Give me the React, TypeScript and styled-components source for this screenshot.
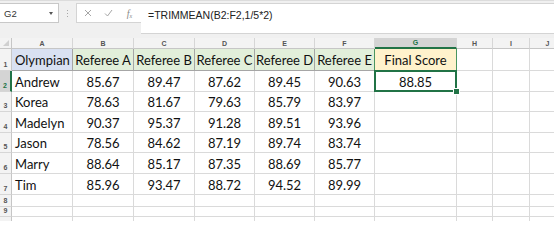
import React from 'react';
import styled, { createGlobalStyle, css } from 'styled-components';

const GlobalStyle = createGlobalStyle`
  html, body {
    margin: 0;
    padding: 0;
    background: #ffffff;
    overflow: hidden;
  }
  body {
    font-family: Lato, "Liberation Sans", sans-serif;
  }
`;

const Window = styled.div`
  width: 554px;
  height: 221px;
  overflow: hidden;
  background: #ffffff;
`;

/* ---------- formula bar ---------- */

const FormulaBar = styled.div`
  display: flex;
  align-items: flex-start;
  height: 38px;
  box-sizing: border-box;
  padding-top: 2px;
  background: #f0f0f0;
  border-top: 1px solid #dcdcdc;
`;

const NameBox = styled.div`
  display: flex;
  align-items: center;
  justify-content: space-between;
  width: 59px;
  height: 20px;
  box-sizing: border-box;
  padding: 0 5px 0 4px;
  background: #ffffff;
  border: 1px solid #c8c8c8;
  border-left: none;
  font-family: "Liberation Sans", Arial, sans-serif;
  font-size: 9.5px;
  color: #333333;
`;

const Caret = styled.span`
  width: 0;
  height: 0;
  border-left: 2.5px solid transparent;
  border-right: 2.5px solid transparent;
  border-top: 3px solid #555555;
`;

const Grip = styled.div`
  display: flex;
  justify-content: center;
  width: 17px;
  padding-top: 7px;
`;

const GripDots = styled.span`
  width: 1px;
  height: 9px;
  background: repeating-linear-gradient(#a8a8a8 0 1px, transparent 1px 3px);
`;

const IconBox = styled.div`
  display: flex;
  align-items: center;
  width: 65px;
  height: 20px;
  box-sizing: border-box;
  background: #ffffff;
  border: 1px solid #d4d4d4;
  border-right: none;
`;

const IconSlot = styled.span`
  display: flex;
  align-items: center;
  justify-content: center;
  width: 21px;
  color: #a6a6a6;
`;

const Fx = styled.span`
  font-family: "Liberation Serif", serif;
  font-style: italic;
  font-size: 10px;
  color: #8a8a8a;
  sub {
    font-size: 6px;
    vertical-align: -1px;
  }
`;

const FormulaInput = styled.div`
  flex: 1;
  height: 31px;
  box-sizing: border-box;
  padding: 5px 7px 0;
  background: #ffffff;
  border: 1px solid #d4d4d4;
  border-left: none;
  border-right: none;
  font-family: "Liberation Sans", Arial, sans-serif;
  font-size: 10.5px;
  line-height: 12px;
  color: #222222;
`;

/* ---------- sheet ---------- */

const Sheet = styled.div`
  display: grid;
  grid-template-columns: 12px 61px 61px 61px 60px 60px 60px 82px 36px 37px 36px;
  grid-template-rows: 11px 22px 21px 20px 21px 20px 21px 21px 12px 10px 12px;
`;

const headText = css`
  font-family: "Liberation Sans", Arial, sans-serif;
  font-size: 7px;
  font-weight: bold;
  color: #555555;
  box-sizing: border-box;
  background: #f3f3f3;
`;

const Corner = styled.div`
  ${headText};
  display: flex;
  align-items: flex-end;
  justify-content: flex-end;
  padding: 0 2px 2px 0;
  border-right: 1px solid #c6c6c6;
  border-bottom: 1px solid #c6c6c6;
`;

const SelectAll = styled.span`
  width: 0;
  height: 0;
  border-left: 6px solid transparent;
  border-bottom: 6px solid #d0d0d0;
`;

const ColHead = styled.div<{ $active?: boolean }>`
  ${headText};
  display: flex;
  align-items: center;
  justify-content: center;
  border-right: 1px solid #d6d6d6;
  border-bottom: 1px solid #c6c6c6;
  ${p =>
    p.$active &&
    css`
      background: #d4d4d4;
      color: #217346;
      border-bottom: 2px solid #217346;
    `}
`;

const RowHead = styled.div<{ $active?: boolean }>`
  ${headText};
  display: flex;
  align-items: flex-end;
  justify-content: center;
  padding-bottom: 1px;
  line-height: 8px;
  border-right: 1px solid #c6c6c6;
  border-bottom: 1px solid #d6d6d6;
  ${p =>
    p.$active &&
    css`
      background: #d4d4d4;
      color: #217346;
      border-right: 2px solid #217346;
    `}
`;

type CellProps = {
  $align?: 'left' | 'center';
  $fill?: string;
  $edge?: string;
  $rightEdge?: string;
  $selected?: boolean;
};

const Cell = styled.div<CellProps>`
  position: relative;
  display: flex;
  align-items: center;
  justify-content: ${p => (p.$align === 'center' ? 'center' : 'flex-start')};
  min-width: 0;
  box-sizing: border-box;
  padding: 1px 3px 0;
  background: ${p => p.$fill ?? '#ffffff'};
  border-right: 1px solid ${p => p.$rightEdge ?? p.$edge ?? '#dadada'};
  border-bottom: 1px solid ${p => p.$edge ?? '#dadada'};
  font-size: 13px;
  color: #111111;
  white-space: nowrap;

  ${p =>
    p.$selected &&
    css`
      &::after {
        content: '';
        position: absolute;
        left: -1px;
        top: -1px;
        right: -1px;
        bottom: -1px;
        border: 2px solid #217346;
        pointer-events: none;
      }
      &::before {
        content: '';
        position: absolute;
        right: -4px;
        bottom: -4px;
        width: 5px;
        height: 5px;
        background: #217346;
        border: 1px solid #ffffff;
        z-index: 2;
      }
    `}
`;

/* ---------- data ---------- */

const COLUMNS = ['A', 'B', 'C', 'D', 'E', 'F', 'G', 'H', 'I', 'J'];
const JUDGES = ['A', 'B', 'C', 'D', 'E'];

const SCORES: [string, string[]][] = [
  ['Andrew', ['85.67', '89.47', '87.62', '89.45', '90.63']],
  ['Korea', ['78.63', '81.67', '79.63', '85.79', '83.97']],
  ['Madelyn', ['90.37', '95.37', '91.28', '89.51', '93.96']],
  ['Jason', ['78.56', '84.62', '87.19', '89.74', '83.74']],
  ['Marry', ['88.64', '85.17', '87.35', '88.69', '85.77']],
  ['Tim', ['85.96', '93.47', '88.72', '94.52', '89.99']],
];

const HEAD_EDGE = '#a6a6a6';
const FINAL_EDGE = '#4a9560';

const EmptyCells = ({ count }: { count: number }) => (
  <>
    {Array.from({ length: count }, (_, i) => (
      <Cell key={i} />
    ))}
  </>
);

export default function App() {
  return (
    <>
      <GlobalStyle />
      <Window>
        <FormulaBar>
          <NameBox>
            G2
            <Caret />
          </NameBox>
          <Grip>
            <GripDots />
          </Grip>
          <IconBox>
            <IconSlot>
              <svg width="8" height="8" viewBox="0 0 8 8">
                <path d="M1 1 L7 7 M7 1 L1 7" stroke="currentColor" strokeWidth="1" fill="none" />
              </svg>
            </IconSlot>
            <IconSlot>
              <svg width="9" height="8" viewBox="0 0 9 8">
                <path d="M1 4.5 L3.5 7 L8 1" stroke="currentColor" strokeWidth="1" fill="none" />
              </svg>
            </IconSlot>
            <IconSlot>
              <Fx>
                f<sub>x</sub>
              </Fx>
            </IconSlot>
          </IconBox>
          <FormulaInput>=TRIMMEAN(B2:F2,1/5*2)</FormulaInput>
        </FormulaBar>

        <Sheet>
          <Corner>
            <SelectAll />
          </Corner>
          {COLUMNS.map(c => (
            <ColHead key={c} $active={c === 'G'}>
              {c}
            </ColHead>
          ))}

          <RowHead>1</RowHead>
          <Cell $fill="#d9e1f2" $edge={HEAD_EDGE}>
            Olympian
          </Cell>
          {JUDGES.map(j => (
            <Cell
              key={j}
              $align="center"
              $fill="#e2efda"
              $edge={HEAD_EDGE}
              $rightEdge={j === 'E' ? FINAL_EDGE : undefined}
            >
              Referee {j}
            </Cell>
          ))}
          <Cell $align="center" $fill="#fff2cc" $rightEdge={FINAL_EDGE}>
            Final Score
          </Cell>
          <EmptyCells count={3} />

          {SCORES.map(([name, marks], i) => (
            <React.Fragment key={name}>
              <RowHead $active={i === 0}>{i + 2}</RowHead>
              <Cell>{name}</Cell>
              {marks.map((m, k) => (
                <Cell key={k} $align="center">
                  {m}
                </Cell>
              ))}
              {i === 0 ? (
                <Cell $align="center" $selected>
                  88.85
                </Cell>
              ) : (
                <Cell />
              )}
              <EmptyCells count={3} />
            </React.Fragment>
          ))}

          {[8, 9].map(n => (
            <React.Fragment key={n}>
              <RowHead>{n}</RowHead>
              <EmptyCells count={10} />
            </React.Fragment>
          ))}
          <RowHead />
          <EmptyCells count={10} />
        </Sheet>
      </Window>
    </>
  );
}
